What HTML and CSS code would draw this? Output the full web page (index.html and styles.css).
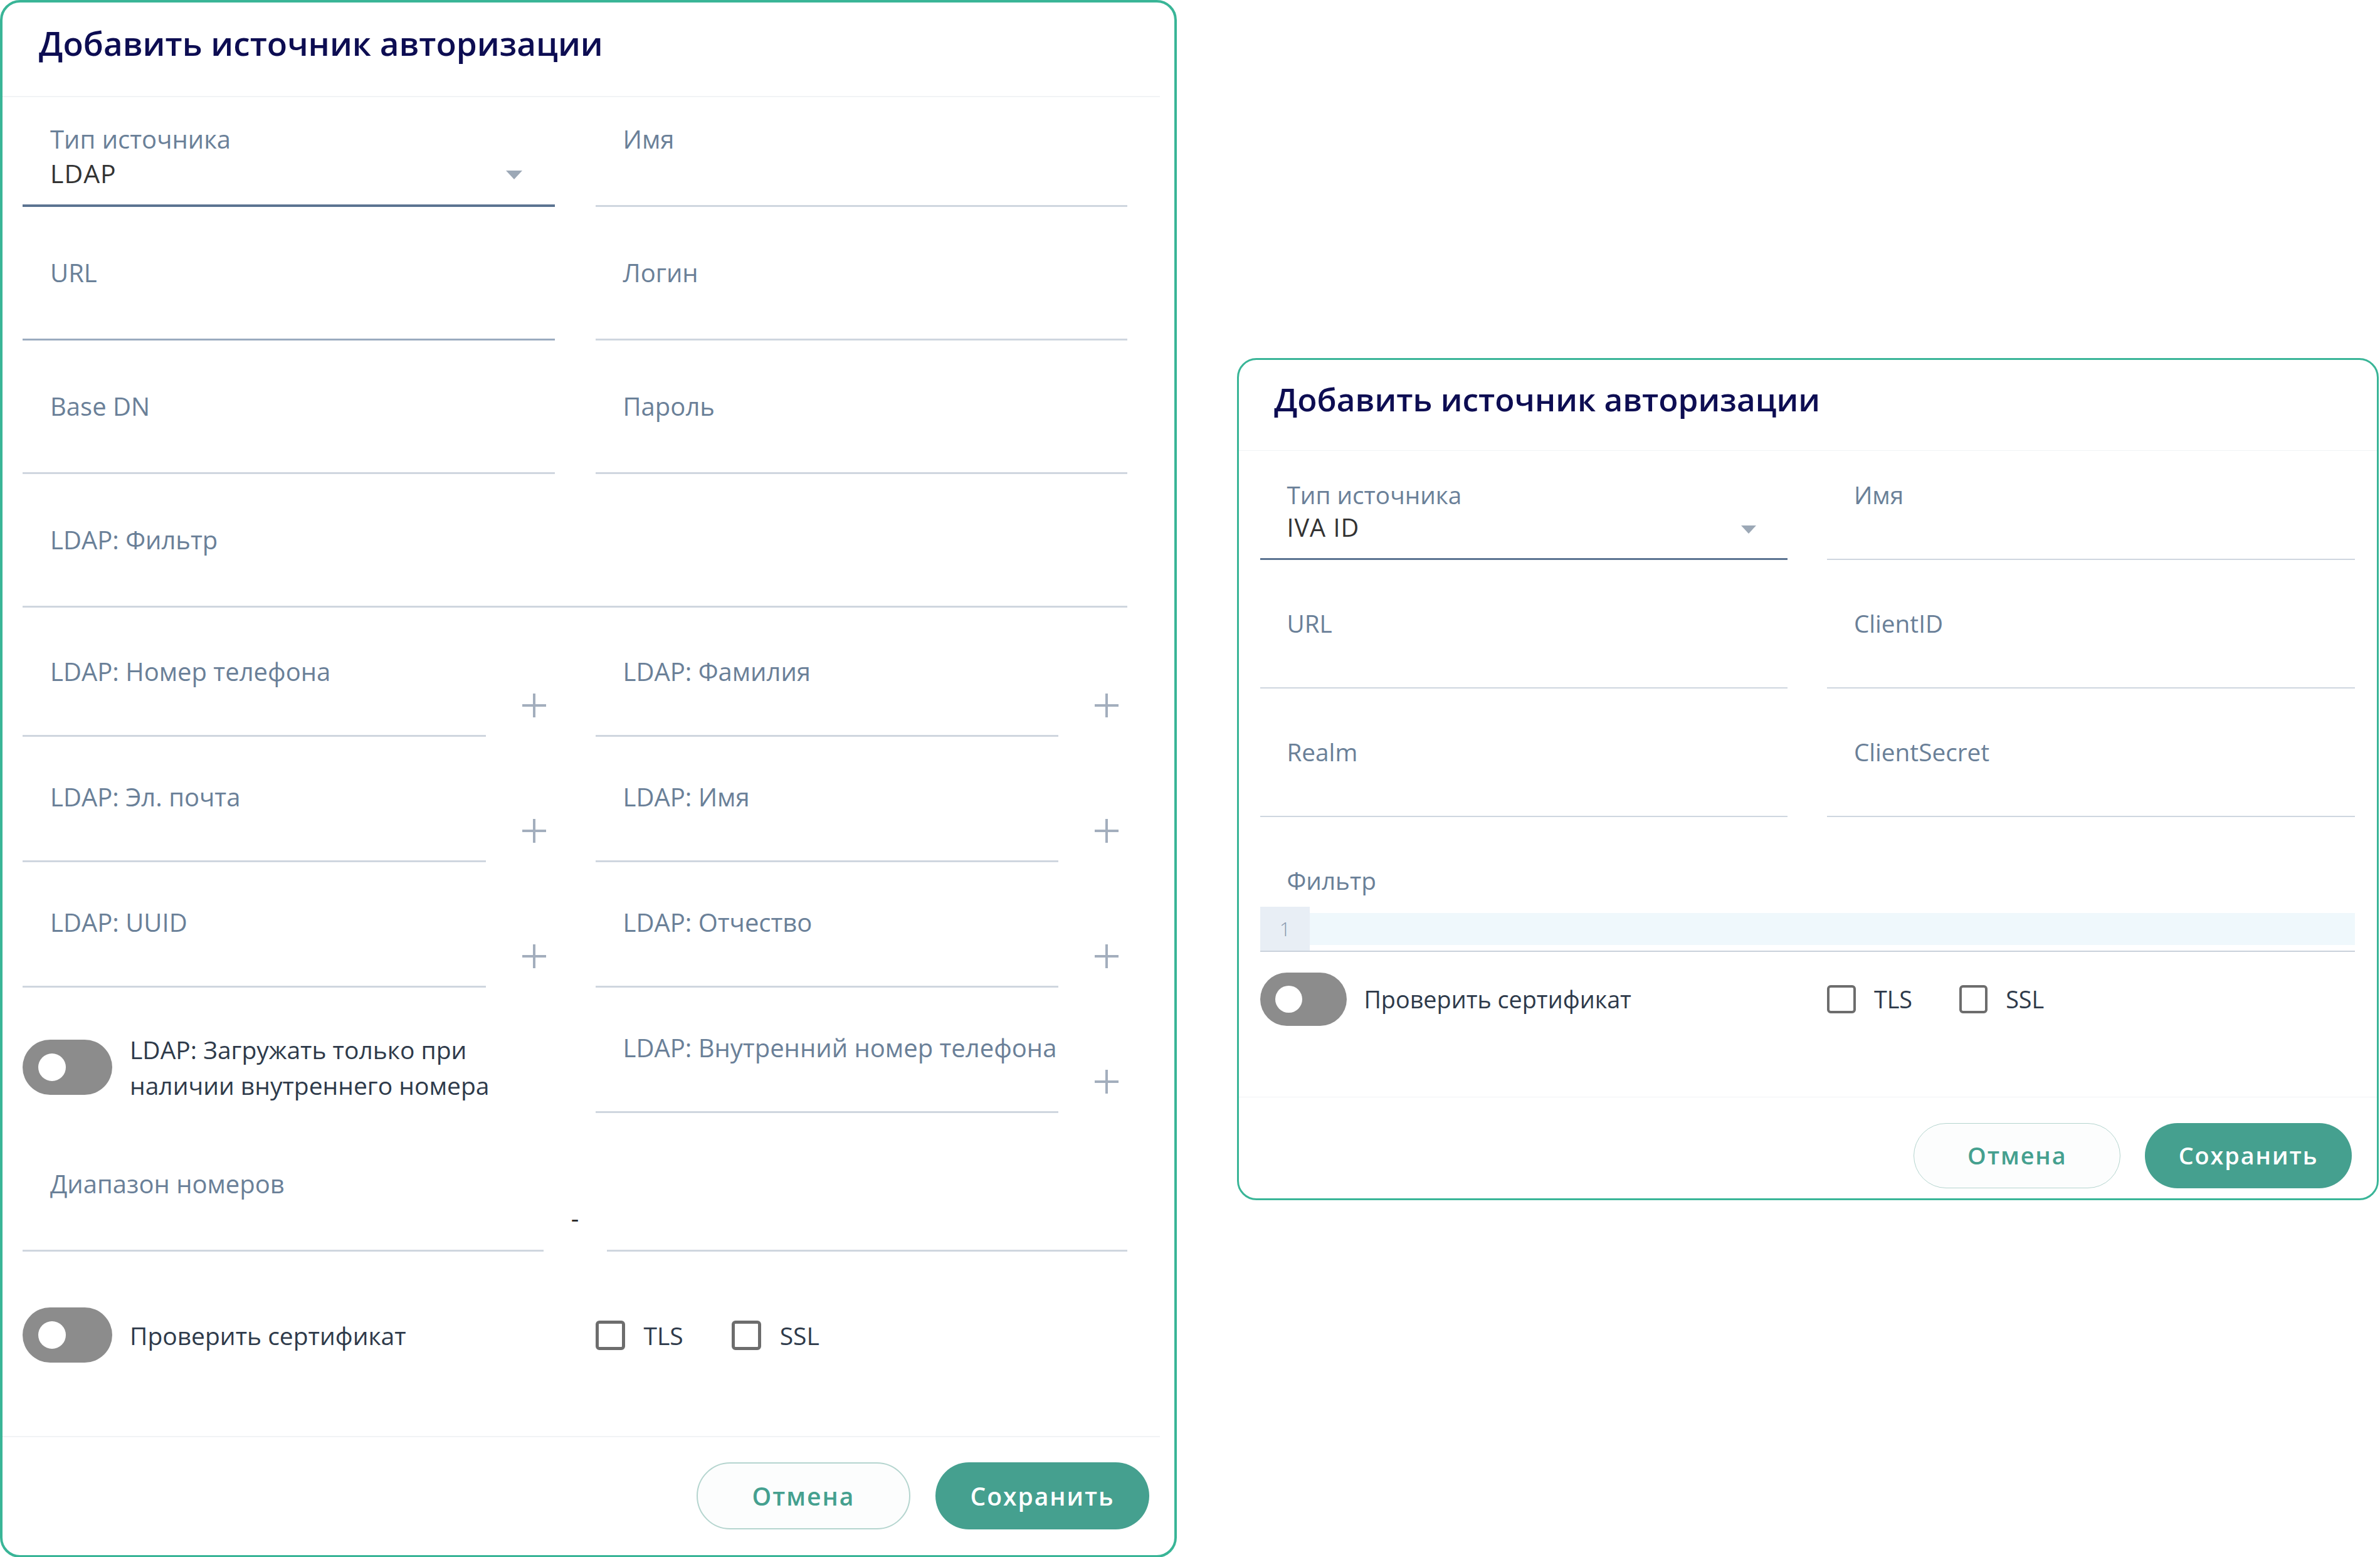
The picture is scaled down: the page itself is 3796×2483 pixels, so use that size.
FILE: index.html
```html
<!DOCTYPE html>
<html lang="ru">
<head>
  <meta charset="UTF-8" />
  <meta name="viewport" content="width=device-width, initial-scale=1.0" />
  <title>Добавить источник авторизации</title>
  <link rel="stylesheet" href="styles.css">
</head>
<body>
  <div class="page">

    <!-- LDAP: длинная форма -->
    <section class="dialog dialog--long">
      <header class="dialog__head">
        <h1 class="dialog__title">Добавить источник авторизации</h1>
      </header>

      <div class="dialog__body">
        <div class="grid">
          <div class="field field--focus">
            <label class="field__label">Тип источника</label>
            <div class="field__control">LDAP <span class="caret"></span></div>
          </div>
          <div class="field">
            <label class="field__label">Имя</label>
            <div class="field__control"></div>
          </div>
          <div class="field field--hover">
            <label class="field__label">URL</label>
            <div class="field__control"></div>
          </div>
          <div class="field">
            <label class="field__label">Логин</label>
            <div class="field__control"></div>
          </div>
          <div class="field">
            <label class="field__label">Base DN</label>
            <div class="field__control"></div>
          </div>
          <div class="field">
            <label class="field__label">Пароль</label>
            <div class="field__control"></div>
          </div>
          <div class="field field--wide">
            <label class="field__label">LDAP: Фильтр</label>
            <div class="field__control"></div>
          </div>
        </div>

        <!-- атрибуты -->
        <div class="grid grid--attrs">
          <div class="attr">
            <div class="field"><label class="field__label">LDAP: Номер телефона</label><div class="field__control"></div></div>
            <button class="attr__add" type="button"><svg viewBox="0 0 40 40" width="40" height="40"><path d="M20 1v38M1 20h38"/></svg></button>
          </div>
          <div class="attr">
            <div class="field"><label class="field__label">LDAP: Фамилия</label><div class="field__control"></div></div>
            <button class="attr__add" type="button"><svg viewBox="0 0 40 40" width="40" height="40"><path d="M20 1v38M1 20h38"/></svg></button>
          </div>
          <div class="attr">
            <div class="field"><label class="field__label">LDAP: Эл. почта</label><div class="field__control"></div></div>
            <button class="attr__add" type="button"><svg viewBox="0 0 40 40" width="40" height="40"><path d="M20 1v38M1 20h38"/></svg></button>
          </div>
          <div class="attr">
            <div class="field"><label class="field__label">LDAP: Имя</label><div class="field__control"></div></div>
            <button class="attr__add" type="button"><svg viewBox="0 0 40 40" width="40" height="40"><path d="M20 1v38M1 20h38"/></svg></button>
          </div>
          <div class="attr">
            <div class="field"><label class="field__label">LDAP: UUID</label><div class="field__control"></div></div>
            <button class="attr__add" type="button"><svg viewBox="0 0 40 40" width="40" height="40"><path d="M20 1v38M1 20h38"/></svg></button>
          </div>
          <div class="attr">
            <div class="field"><label class="field__label">LDAP: Отчество</label><div class="field__control"></div></div>
            <button class="attr__add" type="button"><svg viewBox="0 0 40 40" width="40" height="40"><path d="M20 1v38M1 20h38"/></svg></button>
          </div>
          <div class="switch-row switch-row--top">
            <span class="switch"><span class="switch__knob"></span></span>
            <span class="switch__text">LDAP: Загружать только при наличии внутреннего номера</span>
          </div>
          <div class="attr">
            <div class="field"><label class="field__label">LDAP: Внутренний номер телефона</label><div class="field__control"></div></div>
            <button class="attr__add" type="button"><svg viewBox="0 0 40 40" width="40" height="40"><path d="M20 1v38M1 20h38"/></svg></button>
          </div>
        </div>

        <!-- диапазон -->
        <div class="range">
          <div class="field">
            <label class="field__label">Диапазон номеров</label>
            <div class="field__control"></div>
          </div>
          <span class="range__dash">-</span>
          <div class="field">
            <div class="field__control"></div>
          </div>
        </div>

        <div class="grid grid--opts">
          <div class="switch-row">
            <span class="switch"><span class="switch__knob"></span></span>
            <span class="switch__text">Проверить сертификат</span>
          </div>
          <div class="checks">
            <label class="check"><span class="check__box"></span>TLS</label>
            <label class="check"><span class="check__box"></span>SSL</label>
          </div>
        </div>
      </div>

      <footer class="dialog__foot">
        <button class="btn btn--ghost" type="button">Отмена</button>
        <button class="btn btn--primary" type="button">Сохранить</button>
      </footer>
    </section>

    <!-- IVA ID: короткая форма -->
    <div class="aside">
      <section class="dialog dialog--small">
        <header class="dialog__head">
          <h1 class="dialog__title">Добавить источник авторизации</h1>
        </header>

        <div class="dialog__body">
          <div class="grid">
            <div class="field field--focus">
              <label class="field__label">Тип источника</label>
              <div class="field__control">IVA ID <span class="caret"></span></div>
            </div>
            <div class="field">
              <label class="field__label">Имя</label>
              <div class="field__control"></div>
            </div>
            <div class="field">
              <label class="field__label">URL</label>
              <div class="field__control"></div>
            </div>
            <div class="field">
              <label class="field__label">ClientID</label>
              <div class="field__control"></div>
            </div>
            <div class="field">
              <label class="field__label">Realm</label>
              <div class="field__control"></div>
            </div>
            <div class="field">
              <label class="field__label">ClientSecret</label>
              <div class="field__control"></div>
            </div>
            <div class="field field--wide field--code">
              <label class="field__label">Фильтр</label>
              <div class="code">
                <div class="code__gutter">1</div>
                <div class="code__lines"><div class="code__line"></div></div>
              </div>
            </div>
          </div>

          <div class="grid grid--opts grid--tight">
            <div class="switch-row">
              <span class="switch"><span class="switch__knob"></span></span>
              <span class="switch__text">Проверить сертификат</span>
            </div>
            <div class="checks">
              <label class="check"><span class="check__box"></span>TLS</label>
              <label class="check"><span class="check__box"></span>SSL</label>
            </div>
          </div>
        </div>

        <footer class="dialog__foot">
          <button class="btn btn--ghost" type="button">Отмена</button>
          <button class="btn btn--primary" type="button">Сохранить</button>
        </footer>
      </section>
    </div>

  </div>
</body>
</html>
```

FILE: styles.css
```css
/* БАЗА ---------------------------------------------------------------*/
*,::before,::after{box-sizing:border-box;margin:0;padding:0}
body{
  font-family:"Open Sans","Noto Sans",sans-serif;
  background:#fff;
  color:#333;
}
.page{display:flex;align-items:flex-start;gap:96px}
.aside{padding-top:571px}

/* ДИАЛОГ -------------------------------------------------------------*/
.dialog{
  width:1877px;
  background:#fff;
  border:4px solid #39b597;
  border-radius:32px;
}
.dialog--small{width:1881px;zoom:.968}

.dialog__head{padding:29px 40px 48px 58px;border-bottom:2px solid #f1f3f5}
.dialog__title{font-size:53px;line-height:72px;font-weight:600;color:#0d0d52;white-space:nowrap}

.dialog__body{padding:41px 52px 117px 32px}
.dialog--small .dialog__body{padding:46px 36px 117px 35px}

.dialog__foot{
  display:flex;justify-content:flex-end;gap:40px;
  padding:40px 41px 41px;
  border-top:2px solid #f1f3f5;
}
.dialog--small .dialog__foot{padding:42px 41px 17px}

.dialog--long .dialog__head,
.dialog--long .dialog__body,
.dialog--long .dialog__foot{margin-right:23px}
.dialog--long .dialog__foot{padding-right:17px}

/* СЕТКА --------------------------------------------------------------*/
.grid{display:grid;grid-template-columns:1fr 1fr;column-gap:65px;row-gap:79px}
.grid--attrs{row-gap:70px;margin-top:76px}
.grid--opts{margin-top:89px;align-items:center}
.grid--tight{margin-top:34px}
.field--wide{grid-column:1 / -1}

/* ПОЛЕ ---------------------------------------------------------------*/
.field{
  min-width:0;
  padding-bottom:23px;
  border-bottom:3px solid #cfd6df;
}
.field--hover{border-bottom-color:#9aabbf}
.field--focus{border-bottom:4px solid #5b7391;padding-bottom:22px}
.field__label{
  display:block;
  padding-left:44px;
  font-size:40px;line-height:52px;font-weight:500;
  color:#6a8098;
  white-space:nowrap;
}
.field__control{
  display:flex;justify-content:space-between;align-items:center;
  height:56px;
  padding:0 52px 0 44px;
  font-size:41px;letter-spacing:1px;color:#333;
}
.caret{
  width:0;height:0;margin-top:6px;
  border-left:13px solid transparent;
  border-right:13px solid transparent;
  border-top:14px solid #9ca8b6;
}

/* поле фильтра-редактора */
.field--code{padding-bottom:0;border-bottom:0;margin-top:-1px}
.code{
  display:flex;margin-top:18px;
  border-bottom:3px solid #c9d1db;
}
.code__gutter{
  width:82px;padding-top:10px;
  background:#e8eef5;
  text-align:center;
  font-size:32px;line-height:53px;font-weight:300;color:#8799ae;
}
.code__lines{flex:1;padding:10px 0 9px}
.code__line{height:53px;background:#eff8fc}

/* атрибут с кнопкой «+» */
.attr{display:flex;align-items:flex-start;gap:44px;min-width:0}
.attr .field{flex:1;padding-bottom:19px}
.attr__add{
  flex-shrink:0;
  width:66px;height:56px;margin-top:52px;
  display:flex;justify-content:center;align-items:center;
  background:none;border:0;cursor:pointer;
}
.attr__add path{stroke:#a3aebd;stroke-width:4;fill:none}

/* ДИАПАЗОН -----------------------------------------------------------*/
.range{display:flex;align-items:flex-end;margin-top:87px}
.range .field{flex:1}
.range__dash{
  width:101px;margin-bottom:26px;
  text-align:center;
  font-size:39px;line-height:56px;color:#222;
}

/* ПЕРЕКЛЮЧАТЕЛЬ ------------------------------------------------------*/
.switch-row{display:flex;align-items:center;gap:28px}
.switch-row--top{align-self:start}
.switch{
  flex-shrink:0;
  display:flex;align-items:center;
  width:143px;height:88px;
  padding-left:25px;
  border-radius:44px;
  background:#8c8c8c;
}
.switch__knob{width:44px;height:44px;border-radius:50%;background:#fff}
.switch__text{max-width:640px;font-size:39px;line-height:57px;color:#2e3a4a}

/* ЧЕКБОКСЫ -----------------------------------------------------------*/
.checks{display:flex;align-items:center;gap:77px}
.check{display:flex;align-items:center;gap:30px;font-size:39px;line-height:57px;color:#2e3a4a}
.check__box{width:47px;height:47px;border:5px solid #6d6d6d;border-radius:6px}

/* КНОПКИ -------------------------------------------------------------*/
.btn{
  min-width:341px;height:107px;
  padding:0 40px;
  border-radius:54px;
  font-family:inherit;font-size:39px;font-weight:600;letter-spacing:2px;
  cursor:pointer;
}
.btn--ghost{background:#fcfdfd;border:2px solid #b5d5cf;color:#45a08f}
.btn--primary{background:#45a08f;border:0;color:#fff}
```
